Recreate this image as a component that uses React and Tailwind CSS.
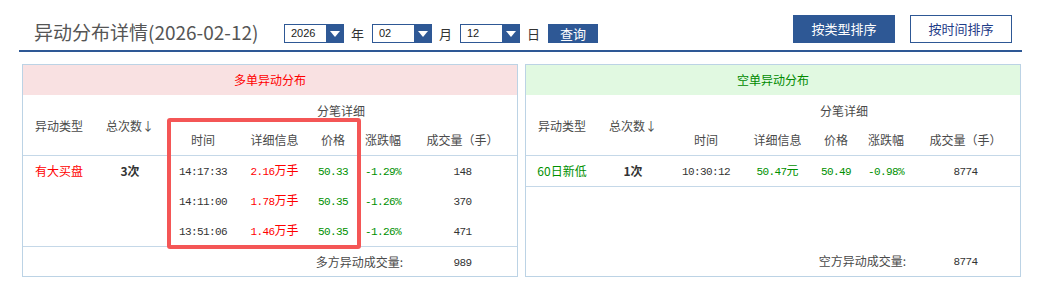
import React from "react";

const cjk = { fontFamily: '"Noto Sans CJK SC", "Liberation Sans", sans-serif' };
const mono = { fontFamily: '"Liberation Mono", "DejaVu Sans Mono", monospace' };

const cols =
  "grid grid-cols-[72px_70px_76px_67px_50px_50px_109px] items-center text-center";

function Num({ children, className = "" }) {
  return (
    <span style={mono} className={`text-[11px] tracking-[-0.6px] ${className}`}>
      {children}
    </span>
  );
}

function Select({ value }) {
  return (
    <div className="mt-[24px] flex h-[19px] w-[60px] border border-[#2e5895] bg-white">
      <span
        className="flex-1 pl-[6px] text-[11px] leading-[17px] text-[#222]"
        style={{ fontFamily: '"Liberation Sans", sans-serif' }}
      >
        {value}
      </span>
      <span className="flex w-[17px] items-center justify-center bg-[#2e5895]">
        <svg width="10" height="6" viewBox="0 0 10 6">
          <polygon points="0,0 10,0 5,6" fill="#fff" />
        </svg>
      </span>
    </div>
  );
}

function Unit({ children }) {
  return (
    <span className="mt-[24px] w-[28px] pl-[7px] text-[13px] leading-[19px] text-[#333]">
      {children}
    </span>
  );
}

function TableHead() {
  return (
    <div className={`${cols} grid-rows-[30px_30px] border-b border-[#c5d8e8] text-[12px] text-[#4a4a4a]`}>
      <div className="row-span-2 pt-[2px]">异动类型</div>
      <div className="row-span-2 pt-[2px]">总次数↓</div>
      <div className="col-span-5 pt-[1px]">分笔详细</div>
      <div>时间</div>
      <div>详细信息</div>
      <div>价格</div>
      <div>涨跌幅</div>
      <div>成交量（手）</div>
    </div>
  );
}

function Row({ type, typeColor, count, time, info, infoUnit, infoColor, price, change, vol }) {
  return (
    <div className={`${cols} h-[30px] text-[12px]`}>
      <div style={{ color: typeColor }}>{type}</div>
      <div className="font-bold text-[#333]">{count}</div>
      <div>
        <Num className="text-[#333]">{time}</Num>
      </div>
      <div style={{ color: infoColor }}>
        <Num>{info}</Num>
        {infoUnit}
      </div>
      <div>
        <Num className="text-[#009000]">{price}</Num>
      </div>
      <div>
        <Num className="text-[#009000]">{change}</Num>
      </div>
      <div>
        <Num className="text-[#333]">{vol}</Num>
      </div>
    </div>
  );
}

function Footer({ label, value }) {
  return (
    <div className={`${cols} mt-auto h-[30px] text-[12px] text-[#4a4a4a]`}>
      <div className="col-span-6 pr-[5px] text-right">{label}</div>
      <div>
        <Num className="text-[#333]">{value}</Num>
      </div>
    </div>
  );
}

export default function App() {
  return (
    <div style={cjk} className="h-[289px] w-[1052px] overflow-hidden bg-white">
      {/* header */}
      <div className="ml-[19px] flex h-[52px] w-[1003px] items-start border-b-2 border-[#2e5895]">
        <div className="w-[265px] pl-[15px] pt-[20px] text-[19px] leading-[24px] text-[#555]">
          异动分布详情(2026-02-12)
        </div>
        <Select value="2026" />
        <Unit>年</Unit>
        <Select value="02" />
        <Unit>月</Unit>
        <Select value="12" />
        <Unit>日</Unit>
        <button className="mt-[24px] h-[19px] w-[50px] bg-[#2e5895] text-[13px] leading-[19px] text-white">
          查询
        </button>
        <button className="ml-auto mt-[15px] h-[28px] w-[102px] bg-[#2e5895] text-[13px] text-white">
          按类型排序
        </button>
        <button className="ml-[15px] mr-[10px] mt-[15px] h-[28px] w-[102px] border border-[#2e5895] bg-white text-[13px] text-[#1f3c88]">
          按时间排序
        </button>
      </div>

      {/* panels */}
      <div className="ml-[22px] mt-[12px] flex gap-[7px]">
        <div className="relative flex h-[213px] w-[496px] flex-col border border-[#bcd3e5]">
          <div className="h-[30px] bg-[#f9e1e2] text-center text-[12px] leading-[30px] text-[#ff0000]">
            多单异动分布
          </div>
          <TableHead />
          <div className="border-b border-[#c5d8e8]">
            <Row type="有大买盘" typeColor="#ff0000" count="3次" time="14:17:33" info="2.16" infoUnit="万手" infoColor="#ff0000" price="50.33" change="-1.29%" vol="148" />
            <Row type="" count="" time="14:11:00" info="1.78" infoUnit="万手" infoColor="#ff0000" price="50.35" change="-1.26%" vol="370" />
            <Row type="" count="" time="13:51:06" info="1.46" infoUnit="万手" infoColor="#ff0000" price="50.35" change="-1.26%" vol="471" />
          </div>
          <Footer label="多方异动成交量:" value="989" />
          <div className="absolute left-[144px] top-[53px] h-[131px] w-[194px] rounded-[3px] border-4 border-[#f45656]" />
        </div>

        <div className="flex h-[213px] w-[496px] flex-col border border-[#bcd3e5]">
          <div className="h-[30px] bg-[#e1f9e1] text-center text-[12px] leading-[30px] text-[#008a00]">
            空单异动分布
          </div>
          <TableHead />
          <div className="border-b border-[#c5d8e8]">
            <Row type="60日新低" typeColor="#009000" count="1次" time="10:30:12" info="50.47" infoUnit="元" infoColor="#009000" price="50.49" change="-0.98%" vol="8774" />
          </div>
          <Footer label="空方异动成交量:" value="8774" />
        </div>
      </div>
    </div>
  );
}
